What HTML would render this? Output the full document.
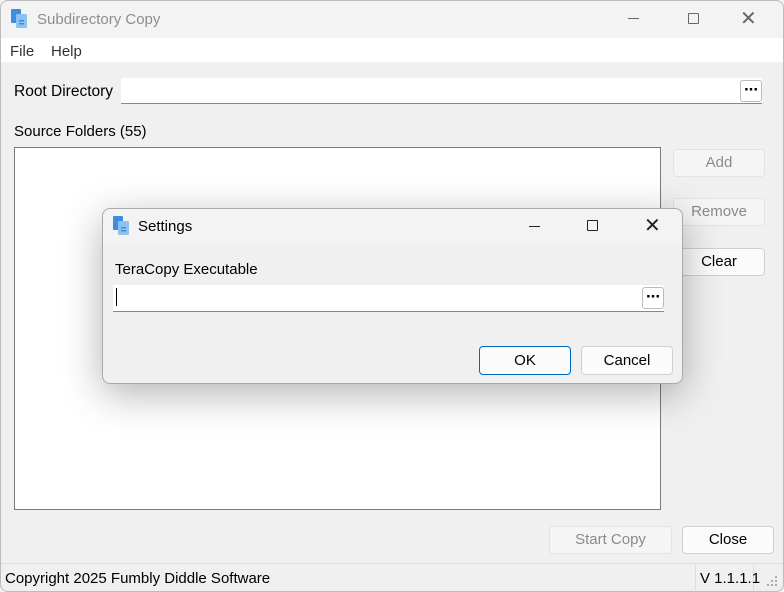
<!DOCTYPE html>
<html><head><style>
*{box-sizing:border-box;margin:0;padding:0}
body{width:784px;height:592px;overflow:hidden;background:#f0f0f0;font-family:"Liberation Sans",sans-serif;font-size:15px;color:#000;position:relative}
.a{position:absolute}
.btn{position:absolute;border:1px solid #d0d0d0;border-radius:4px;background:#fbfbfb;text-align:center;font-size:15px}
.dis{color:#8a8a8a;background:#f5f5f5;border-color:#e3e3e3}
.dots{position:absolute;width:22px;height:22px;border:1px solid #bbb;border-radius:3px;background:#fff;text-align:center;font-weight:bold;font-size:17px;line-height:17px;letter-spacing:-1px}
</style></head><body>
<div class="a" style="left:0;top:0;width:784px;height:592px;border:1px solid #bcbcbc;border-radius:8px;"></div>
<div class="a" style="left:1px;top:1px;width:782px;height:37px;background:#f3f3f3;border-radius:8px 8px 0 0"></div>
<svg class="a" style="left:11px;top:9px" width="18" height="20" viewBox="0 0 18 20"><rect x="0" y="0" width="10" height="14" rx="1" fill="#3d8ee0"/><rect x="5" y="5" width="11" height="14" rx="1" fill="#8cc2f2"/><rect x="8" y="11" width="5" height="1.5" fill="#3d8ee0"/><rect x="8" y="14" width="5" height="1.5" fill="#3d8ee0"/></svg>
<div class="a" style="left:37px;top:11px;font-size:15px;color:#8d8d8d">Subdirectory Copy</div>
<div class="a" style="left:628px;top:18px;width:11px;height:1px;background:#666"></div>
<div class="a" style="left:688px;top:13px;width:11px;height:11px;border:1px solid #666;border-radius:1px"></div>
<div class="a" style="left:740px;top:6px;font-size:20px;color:#666">✕</div>
<div class="a" style="left:1px;top:38px;width:782px;height:24px;background:#fff"></div>
<div class="a" style="left:10px;top:43px;font-size:15px;color:#333">File</div>
<div class="a" style="left:51px;top:43px;font-size:15px;color:#333">Help</div>
<div class="a" style="left:14px;top:83px;font-size:15.5px">Root Directory</div>
<div class="a" style="left:121px;top:78px;width:641px;height:26px;background:#fff;border-bottom:1px solid #888"></div>
<div class="dots" style="left:740px;top:80px">···</div>
<div class="a" style="left:14px;top:123px;font-size:15px">Source Folders (55)</div>
<div class="a" style="left:14px;top:147px;width:647px;height:363px;background:#fff;border:1px solid #7a7a7a"></div>
<div class="btn dis" style="left:673px;top:149px;width:92px;height:28px;line-height:26px">Add</div>
<div class="btn dis" style="left:673px;top:198px;width:92px;height:28px;line-height:26px">Remove</div>
<div class="btn" style="left:673px;top:248px;width:92px;height:28px;line-height:26px">Clear</div>
<div class="btn dis" style="left:549px;top:526px;width:123px;height:28px;line-height:26px">Start Copy</div>
<div class="btn" style="left:682px;top:526px;width:92px;height:28px;line-height:26px">Close</div>
<div class="a" style="left:1px;top:563px;width:782px;height:1px;background:#dcdcdc"></div>
<div class="a" style="left:5px;top:570px;font-size:15px">Copyright 2025 Fumbly Diddle Software</div>
<div class="a" style="left:695px;top:565px;width:1px;height:25px;background:#dcdcdc"></div>
<div class="a" style="left:753px;top:565px;width:1px;height:25px;background:#dcdcdc"></div>
<div class="a" style="left:700px;top:570px;font-size:15px">V 1.1.1.1</div>
<svg class="a" style="left:767px;top:576px" width="12" height="12"><g fill="#aaa"><rect x="8" y="0" width="2" height="2"/><rect x="4" y="4" width="2" height="2"/><rect x="8" y="4" width="2" height="2"/><rect x="0" y="8" width="2" height="2"/><rect x="4" y="8" width="2" height="2"/><rect x="8" y="8" width="2" height="2"/></g></svg>
<!-- dialog -->
<div class="a" style="left:102px;top:208px;width:581px;height:176px;background:#f0f0f0;border:1px solid #aaa;border-radius:8px;box-shadow:0 10px 40px rgba(0,0,0,0.3)"></div>
<div class="a" style="left:103px;top:209px;width:579px;height:37px;background:#f3f3f3;border-radius:8px 8px 0 0"></div>
<svg class="a" style="left:113px;top:216px" width="18" height="20" viewBox="0 0 18 20"><rect x="0" y="0" width="10" height="14" rx="1" fill="#3d8ee0"/><rect x="5" y="5" width="11" height="14" rx="1" fill="#8cc2f2"/><rect x="8" y="11" width="5" height="1.5" fill="#3d8ee0"/><rect x="8" y="14" width="5" height="1.5" fill="#3d8ee0"/></svg>
<div class="a" style="left:138px;top:218px;font-size:15px">Settings</div>
<div class="a" style="left:529px;top:226px;width:11px;height:1px;background:#222"></div>
<div class="a" style="left:587px;top:220px;width:11px;height:11px;border:1px solid #222;border-radius:1px"></div>
<div class="a" style="left:644px;top:213px;font-size:20px;color:#222">✕</div>
<div class="a" style="left:115px;top:261px;font-size:15px">TeraCopy Executable</div>
<div class="a" style="left:113px;top:285px;width:551px;height:27px;background:#fff;border-bottom:1px solid #888"></div>
<div class="a" style="left:116px;top:288px;width:1px;height:18px;background:#000"></div>
<div class="dots" style="left:642px;top:287px">···</div>
<div class="btn" style="left:479px;top:346px;width:92px;height:29px;line-height:27px;border:1px solid #0067c0">OK</div>
<div class="btn" style="left:581px;top:346px;width:92px;height:29px;line-height:27px">Cancel</div>
</body></html>
